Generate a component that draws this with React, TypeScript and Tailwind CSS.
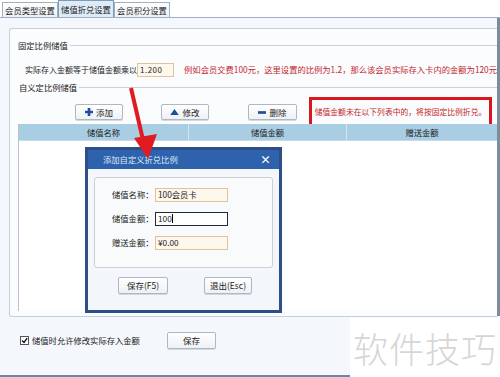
const font = { fontFamily: '"Noto Sans CJK SC", "Liberation Sans", sans-serif' };

const Btn = ({ children, className = "" }: { children: React.ReactNode; className?: string }) => (
  <div
    className={`flex items-center justify-center gap-[3px] h-[16px] whitespace-nowrap border border-[#aeb7c2] rounded-[2px] bg-gradient-to-b from-white to-[#eef1f5] text-[8.5px] text-[#222] shadow-[0_1px_0_#d3d8de] ${className}`}
  >
    {children}
  </div>
);

const Field = ({ label, value, focus }: { label: string; value: string; focus?: boolean }) => (
  <div className="flex items-center h-[15px]">
    <span className="w-[42px] text-[8.3px] text-[#222] whitespace-nowrap">{label}</span>
    <div
      className={`ml-[1px] w-[73px] h-[14px] flex items-center px-[2px] text-[8.3px] leading-none whitespace-nowrap ${
        focus ? "border border-[#1c2a40] bg-white" : "border border-[#e0c29c] bg-[#fdf7ec]"
      }`}
    >
      {value}
      {focus && <span className="w-px h-[9px] bg-black" />}
    </div>
  </div>
);

export default function App() {
  return (
    <div className="relative w-[500px] h-[377px] overflow-hidden bg-[#f4f7fb] text-[#222] leading-none" style={font}>
      {/* tabs */}
      <div className="flex items-end h-[18px] pl-[2px] bg-white border-b border-[#9fb0c2]">
        <div className="h-[15px] w-[56px] flex items-center justify-center whitespace-nowrap border border-[#9fb0c2] border-b-0 bg-gradient-to-b from-white to-[#eef1f5] text-[8.3px]">
          会员类型设置
        </div>
        <div className="h-[17px] w-[56px] flex items-center justify-center whitespace-nowrap border border-[#7f9ab5] border-b-0 bg-[#dcebf7] text-[8.3px]">
          储值折兑设置
        </div>
        <div className="h-[15px] w-[56px] flex items-center justify-center whitespace-nowrap border border-[#9fb0c2] border-b-0 bg-gradient-to-b from-white to-[#eef1f5] text-[8.3px]">
          会员积分设置
        </div>
      </div>

      <div className="flex h-[359px]">
        <div className="flex-1 flex flex-col">
          {/* group box */}
          <div className="ml-[9px] mt-[10px] w-[488px] h-[289px] border border-r-0 border-[#c7d0da] rounded-l-[3px] bg-[#fbfcfe] flex flex-col pl-[8px]">
            <div className="flex items-center h-[16px] mt-[8px] text-[8.3px] whitespace-nowrap">
              <span>固定比例储值</span>
              <div className="flex-1 ml-[2px] border-t border-[#c9d2dc]" />
            </div>
            <div className="flex items-center h-[15px] mt-[9px] pl-[7px] text-[8px] whitespace-nowrap">
              <span className="w-[118px]">实际存入金额等于储值金额乘以</span>
              <div className="w-[45px] h-[14px] border border-[#e0c29c] bg-[#fdf7ec] flex items-center px-[2px] text-[8px] tracking-[0.5px]">
                1.200
              </div>
              <span className="ml-[10px] text-[#c3262b] text-[8.3px]">
                例如会员交费100元，这里设置的比例为1.2，那么该会员实际存入卡内的金额为120元
              </span>
            </div>
            <div className="flex items-center h-[12px] mt-[4px] text-[8.3px] whitespace-nowrap">
              <span className="ml-[1px]">自义定比例储值</span>
              <div className="flex-1 ml-[2px] border-t border-[#c9d2dc]" />
            </div>

            {/* buttons row */}
            <div className="flex items-center h-[16px] mt-[11px]">
              <Btn className="ml-[57px] w-[48px]">
                <svg width="8" height="8" viewBox="0 0 9 9">
                  <path d="M3 0h3v3h3v3H6v3H3V6H0V3h3z" fill="#1e4f9c" />
                </svg>
                添加
              </Btn>
              <Btn className="ml-[38px] w-[48px]">
                <svg width="9" height="6" viewBox="0 0 10 7">
                  <path d="M5 0L10 7H0z" fill="#1e4f9c" />
                </svg>
                修改
              </Btn>
              <Btn className="ml-[39px] w-[49px]">
                <svg width="8" height="3" viewBox="0 0 9 3">
                  <rect width="9" height="3" fill="#1e4f9c" />
                </svg>
                删除
              </Btn>
              <div className="ml-[12px] w-[183px] h-[31px] border-[3px] border-[#d8171e] flex items-center justify-center whitespace-nowrap text-[7.8px] text-[#c3262b]">
                储值金额未在以下列表中的，将按固定比例折兑。
              </div>
            </div>

            {/* table */}
            <div className="mt-[4px] flex-1 mb-[5px] flex flex-col border-l border-[#b9c3cd]">
              <div className="flex h-[17px] bg-[#a9cde2] text-[8.3px] border-b border-[#c8dbe7] whitespace-nowrap">
                <div className="w-[170px] flex items-center justify-center border-r border-[#d5e5ef]">储值名称</div>
                <div className="w-[158px] flex items-center justify-center border-r border-[#d5e5ef]">储值金额</div>
                <div className="flex-1 flex items-center justify-center">赠送金额</div>
              </div>
              <div className="flex-1 bg-white" />
            </div>
          </div>

          {/* bottom row */}
          <div className="flex items-center h-[16px] mt-[15px] ml-[20px] text-[8.3px] whitespace-nowrap">
            <div className="w-[9px] h-[9px] border border-[#555] bg-white flex items-center justify-center">
              <svg width="7" height="7" viewBox="0 0 7 7">
                <path d="M1 3.5L3 5.5L6.2 1.2" stroke="#111" strokeWidth="1.4" fill="none" />
              </svg>
            </div>
            <span className="ml-[3px] w-[112px]">储值时允许修改实际存入金额</span>
            <Btn className="ml-[23px] w-[49px] h-[17px]">保存</Btn>
          </div>
          <div className="mt-auto h-[2px] bg-[#6d86a3] w-[350px]" />
        </div>
        <div className="w-[3px] bg-[#7d8c9c] h-[298px]" />
      </div>

      {/* dialog */}
      <div className="absolute left-[85px] top-[147px] w-[197px] h-[166px] border-[3px] border-[#2c4f87] bg-[#f3f7fb] flex flex-col">
        <div className="h-[19px] bg-[#2e62ad] flex items-center justify-between pl-[15px] pr-[8px] text-[8.3px] text-[#dfe9f7] whitespace-nowrap">
          <span>添加自定义折兑比例</span>
          <span className="text-white font-bold text-[11px]">×</span>
        </div>
        <div className="mx-[6px] mt-[8px] h-[91px] border border-[#c9d0d9] rounded-[3px] bg-[#f8fafc] flex flex-col pt-[9px] pl-[17px] gap-[9px]">
          <Field label="储值名称：" value="100会员卡" />
          <Field label="储值金额：" value="100" focus />
          <Field label="赠送金额：" value="¥0.00" />
        </div>
        <div className="flex mt-[9px]">
          <Btn className="ml-[30px] w-[50px] h-[17px]">保存(F5)</Btn>
          <Btn className="ml-[36px] w-[48px] h-[17px]">退出(Esc)</Btn>
        </div>
      </div>

      {/* arrow */}
      <svg className="absolute left-0 top-0" width="500" height="377" viewBox="0 0 500 377">
        <line x1="131" y1="88" x2="143" y2="140" stroke="#e01b22" strokeWidth="4" />
        <path d="M134 138L157 134L148 159z" fill="#e01b22" />
      </svg>

      {/* watermark */}
      <div className="absolute left-[350px] top-[318px] w-[150px] h-[59px] bg-white flex items-center justify-center whitespace-nowrap text-[35px] font-light text-[#d6d6d6] tracking-[1px]">
        软件技巧
      </div>
    </div>
  );
}
